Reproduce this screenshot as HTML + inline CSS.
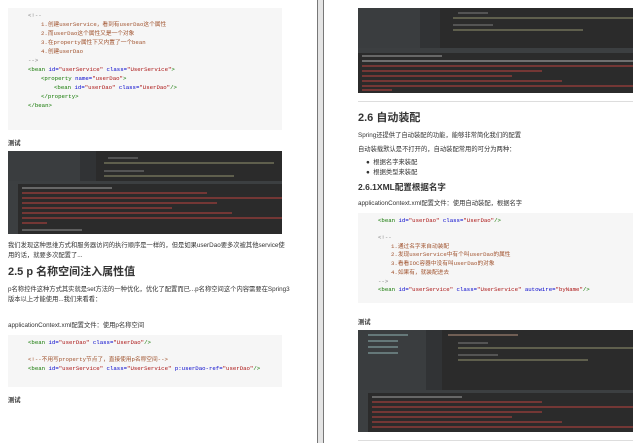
<!DOCTYPE html>
<html><head><meta charset="utf-8"><style>
*{margin:0;padding:0;box-sizing:border-box}
body{width:640px;height:443px;background:#fff;position:relative;overflow:hidden;font-family:"Liberation Sans","Noto Sans CJK SC",sans-serif;color:#333}
.a{position:absolute;white-space:nowrap}
.code{position:absolute;background:#f6f6f6}
.code div{position:absolute;white-space:nowrap;font-family:"Liberation Mono","Noto Sans CJK SC",monospace;font-size:5.7px;line-height:8px}
.cm{color:#a0522d}.tg{color:#170}.at{color:#00c}.st{color:#a11}.gr{color:#888}
.t{font-size:6.3px;color:#333}
.h2{font-size:11px;font-weight:bold;color:#333}
.h3{font-size:8.5px;font-weight:bold;color:#333}
.ide{position:absolute;background:#2b2b2b;overflow:hidden}
.ide .side{position:absolute;left:0;top:0;background:#3c3f41}
.ide .gut{position:absolute;background:#313335}
.ide .ln{position:absolute;height:1.5px;opacity:.55}
.ide .bar{position:absolute;left:0;right:0;background:#3c3f41}
</style></head><body>
<div class="a" style="left:317px;top:0;width:1px;height:443px;background:#777"></div>
<div class="a" style="left:318px;top:0;width:5px;height:443px;background:#e4e4e4"></div>
<div class="a" style="left:323px;top:0;width:1px;height:443px;background:#777"></div>

<div class="code" style="left:8px;top:8px;width:274px;height:122px">
<div class="gr" style="left:20px;top:4px">&lt;!--</div>
<div class="cm" style="left:33px;top:13px">1.创建userService，看到有userDao这个属性</div>
<div class="cm" style="left:33px;top:22px">2.而userDao这个属性又是一个对象</div>
<div class="cm" style="left:33px;top:31px">3.在property属性下又内置了一个bean</div>
<div class="cm" style="left:33px;top:40px">4.创建userDao</div>
<div class="gr" style="left:20px;top:49px">--&gt;</div>
<div style="left:20px;top:58px"><span class="tg">&lt;bean</span> <span class="at">id=</span><span class="st">"userService"</span> <span class="at">class=</span><span class="st">"UserService"</span><span class="tg">&gt;</span></div>
<div style="left:33px;top:67px"><span class="tg">&lt;property</span> <span class="at">name=</span><span class="st">"userDao"</span><span class="tg">&gt;</span></div>
<div style="left:46px;top:76px"><span class="tg">&lt;bean</span> <span class="at">id=</span><span class="st">"userDao"</span> <span class="at">class=</span><span class="st">"UserDao"</span><span class="tg">/&gt;</span></div>
<div class="tg" style="left:33px;top:85px">&lt;/property&gt;</div>
<div class="tg" style="left:20px;top:94px">&lt;/bean&gt;</div>
</div>
<div class="a t" style="left:8px;top:138px;font-weight:bold">测试</div>

<div class="ide" style="left:8px;top:151px;width:274px;height:83px">
<div class="side" style="width:72px;height:30px;background:#3a3d3f"></div>
<div class="gut" style="left:72px;top:0;width:16px;height:30px"></div>
<div class="bar" style="top:30px;height:3px"></div>
<div class="gut" style="left:0;top:33px;width:10px;height:50px;background:#3c3f41"></div>
<div class="ln" style="left:100px;top:6px;width:30px;background:#777"></div>
<div class="ln" style="left:96px;top:11px;width:170px;background:#8a8a6a"></div>
<div class="ln" style="left:96px;top:19px;width:40px;background:#777"></div>
<div class="ln" style="left:96px;top:24px;width:130px;background:#8a8a6a"></div>
<div class="ln" style="left:14px;top:36px;width:90px;background:#999"></div>
<div class="ln" style="left:14px;top:41px;width:185px;background:#b0413e"></div>
<div class="ln" style="left:14px;top:46px;width:260px;background:#b0413e"></div>
<div class="ln" style="left:14px;top:51px;width:195px;background:#b0413e"></div>
<div class="ln" style="left:14px;top:56px;width:150px;background:#b0413e"></div>
<div class="ln" style="left:14px;top:61px;width:210px;background:#b0413e"></div>
<div class="ln" style="left:14px;top:66px;width:260px;background:#b0413e"></div>
<div class="ln" style="left:14px;top:71px;width:25px;background:#b0413e"></div>
<div class="ln" style="left:14px;top:78px;width:60px;background:#888"></div>
</div>

<div class="a t" style="left:8px;top:240px">我们发现这种思维方式和服务器访问的执行顺序是一样的，但是如果userDao要多次被其他service使</div>
<div class="a t" style="left:8px;top:250px">用的话，就要多次配置了...</div>
<div class="a h2" style="left:8px;top:263px">2.5 p 名称空间注入属性值</div>
<div class="a t" style="left:8px;top:284px">p名称控件这种方式其实就是set方法的一种优化，优化了配置而已...p名称空间这个内容需要在Spring3</div>
<div class="a t" style="left:8px;top:294px">版本以上才能使用...我们来看看：</div>
<div class="a t" style="left:8px;top:320px">applicationContext.xml配置文件：使用p名称空间</div>
<div class="code" style="left:8px;top:335px;width:274px;height:52px">
<div style="left:20px;top:4px"><span class="tg">&lt;bean</span> <span class="at">id=</span><span class="st">"userDao"</span> <span class="at">class=</span><span class="st">"UserDao"</span><span class="tg">/&gt;</span></div>
<div class="cm" style="left:20px;top:21px">&lt;!--不用写property节点了，直接使用p名称空间--&gt;</div>
<div style="left:20px;top:30px"><span class="tg">&lt;bean</span> <span class="at">id=</span><span class="st">"userService"</span> <span class="at">class=</span><span class="st">"UserService"</span> <span class="at">p:userDao-ref=</span><span class="st">"userDao"</span><span class="tg">/&gt;</span></div>
</div>
<div class="a t" style="left:8px;top:395px;font-weight:bold">测试</div>

<div class="ide" style="left:358px;top:8px;width:275px;height:85px">
<div class="side" style="width:62px;height:40px;background:#3a3d3f"></div>
<div class="gut" style="left:62px;top:0;width:20px;height:40px"></div>
<div class="bar" style="top:40px;height:5px"></div>
<div class="ln" style="left:100px;top:4px;width:30px;background:#777"></div>
<div class="ln" style="left:95px;top:9px;width:180px;background:#8a8a6a"></div>
<div class="ln" style="left:95px;top:16px;width:40px;background:#777"></div>
<div class="ln" style="left:95px;top:21px;width:130px;background:#8a8a6a"></div>
<div class="ln" style="left:4px;top:47px;width:80px;background:#999"></div>
<div class="ln" style="left:4px;top:52px;width:271px;background:#aaa"></div>
<div class="ln" style="left:4px;top:57px;width:271px;background:#b0413e"></div>
<div class="ln" style="left:4px;top:62px;width:180px;background:#b0413e"></div>
<div class="ln" style="left:4px;top:67px;width:150px;background:#b0413e"></div>
<div class="ln" style="left:4px;top:72px;width:200px;background:#b0413e"></div>
<div class="ln" style="left:4px;top:77px;width:271px;background:#b0413e"></div>
<div class="ln" style="left:4px;top:81px;width:30px;background:#b0413e"></div>
</div>
<div class="a" style="left:358px;top:101px;width:275px;height:1px;background:#ddd"></div>
<div class="a h2" style="left:358px;top:109px">2.6 自动装配</div>
<div class="a t" style="left:358px;top:130px">Spring还提供了自动装配的功能，能够非常简化我们的配置</div>
<div class="a t" style="left:358px;top:144px">自动装载默认是不打开的，自动装配常用的可分为两种：</div>
<div class="a t" style="left:366px;top:157px">●&nbsp; 根据名字来装配</div>
<div class="a t" style="left:366px;top:167px">●&nbsp; 根据类型来装配</div>
<div class="a h3" style="left:358px;top:181px">2.6.1XML配置根据名字</div>
<div class="a t" style="left:358px;top:198px">applicationContext.xml配置文件：使用自动装配，根据名字</div>
<div class="code" style="left:358px;top:213px;width:275px;height:90px">
<div style="left:20px;top:4px"><span class="tg">&lt;bean</span> <span class="at">id=</span><span class="st">"userDao"</span> <span class="at">class=</span><span class="st">"UserDao"</span><span class="tg">/&gt;</span></div>
<div class="gr" style="left:20px;top:21px">&lt;!--</div>
<div class="cm" style="left:33px;top:29.7px">1.通过名字来自动装配</div>
<div class="cm" style="left:33px;top:38.4px">2.发现userService中有个叫userDao的属性</div>
<div class="cm" style="left:33px;top:47px">3.看看IOC容器中没有叫userDao的对象</div>
<div class="cm" style="left:33px;top:55.8px">4.如果有，就装配进去</div>
<div class="gr" style="left:20px;top:64.5px">--&gt;</div>
<div style="left:20px;top:73px"><span class="tg">&lt;bean</span> <span class="at">id=</span><span class="st">"userService"</span> <span class="at">class=</span><span class="st">"UserService"</span> <span class="at">autowire=</span><span class="st">"byName"</span><span class="tg">/&gt;</span></div>
</div>
<div class="a t" style="left:358px;top:317px;font-weight:bold">测试</div>
<div class="ide" style="left:358px;top:330px;width:275px;height:102px">
<div class="side" style="width:68px;height:60px;background:#3a3d3f"></div>
<div class="gut" style="left:68px;top:0;width:16px;height:60px"></div>
<div class="bar" style="top:60px;height:3px"></div>
<div class="gut" style="left:0;top:63px;width:10px;height:39px;background:#3c3f41"></div>
<div class="ln" style="left:10px;top:4px;width:40px;background:#8aa"></div>
<div class="ln" style="left:10px;top:10px;width:30px;background:#8aa"></div>
<div class="ln" style="left:10px;top:16px;width:30px;background:#8aa"></div>
<div class="ln" style="left:10px;top:22px;width:30px;background:#8aa"></div>
<div class="ln" style="left:90px;top:4px;width:70px;background:#a87"></div>
<div class="ln" style="left:100px;top:12px;width:30px;background:#777"></div>
<div class="ln" style="left:100px;top:17px;width:175px;background:#8a8a6a"></div>
<div class="ln" style="left:100px;top:24px;width:40px;background:#777"></div>
<div class="ln" style="left:100px;top:29px;width:130px;background:#8a8a6a"></div>
<div class="ln" style="left:14px;top:66px;width:90px;background:#999"></div>
<div class="ln" style="left:14px;top:71px;width:170px;background:#b0413e"></div>
<div class="ln" style="left:14px;top:76px;width:261px;background:#b0413e"></div>
<div class="ln" style="left:14px;top:81px;width:170px;background:#b0413e"></div>
<div class="ln" style="left:14px;top:86px;width:140px;background:#b0413e"></div>
<div class="ln" style="left:14px;top:91px;width:190px;background:#b0413e"></div>
<div class="ln" style="left:14px;top:96px;width:261px;background:#b0413e"></div>
</div>
<div class="a" style="left:358px;top:440px;width:275px;height:1px;background:#ddd"></div>
</body></html>
